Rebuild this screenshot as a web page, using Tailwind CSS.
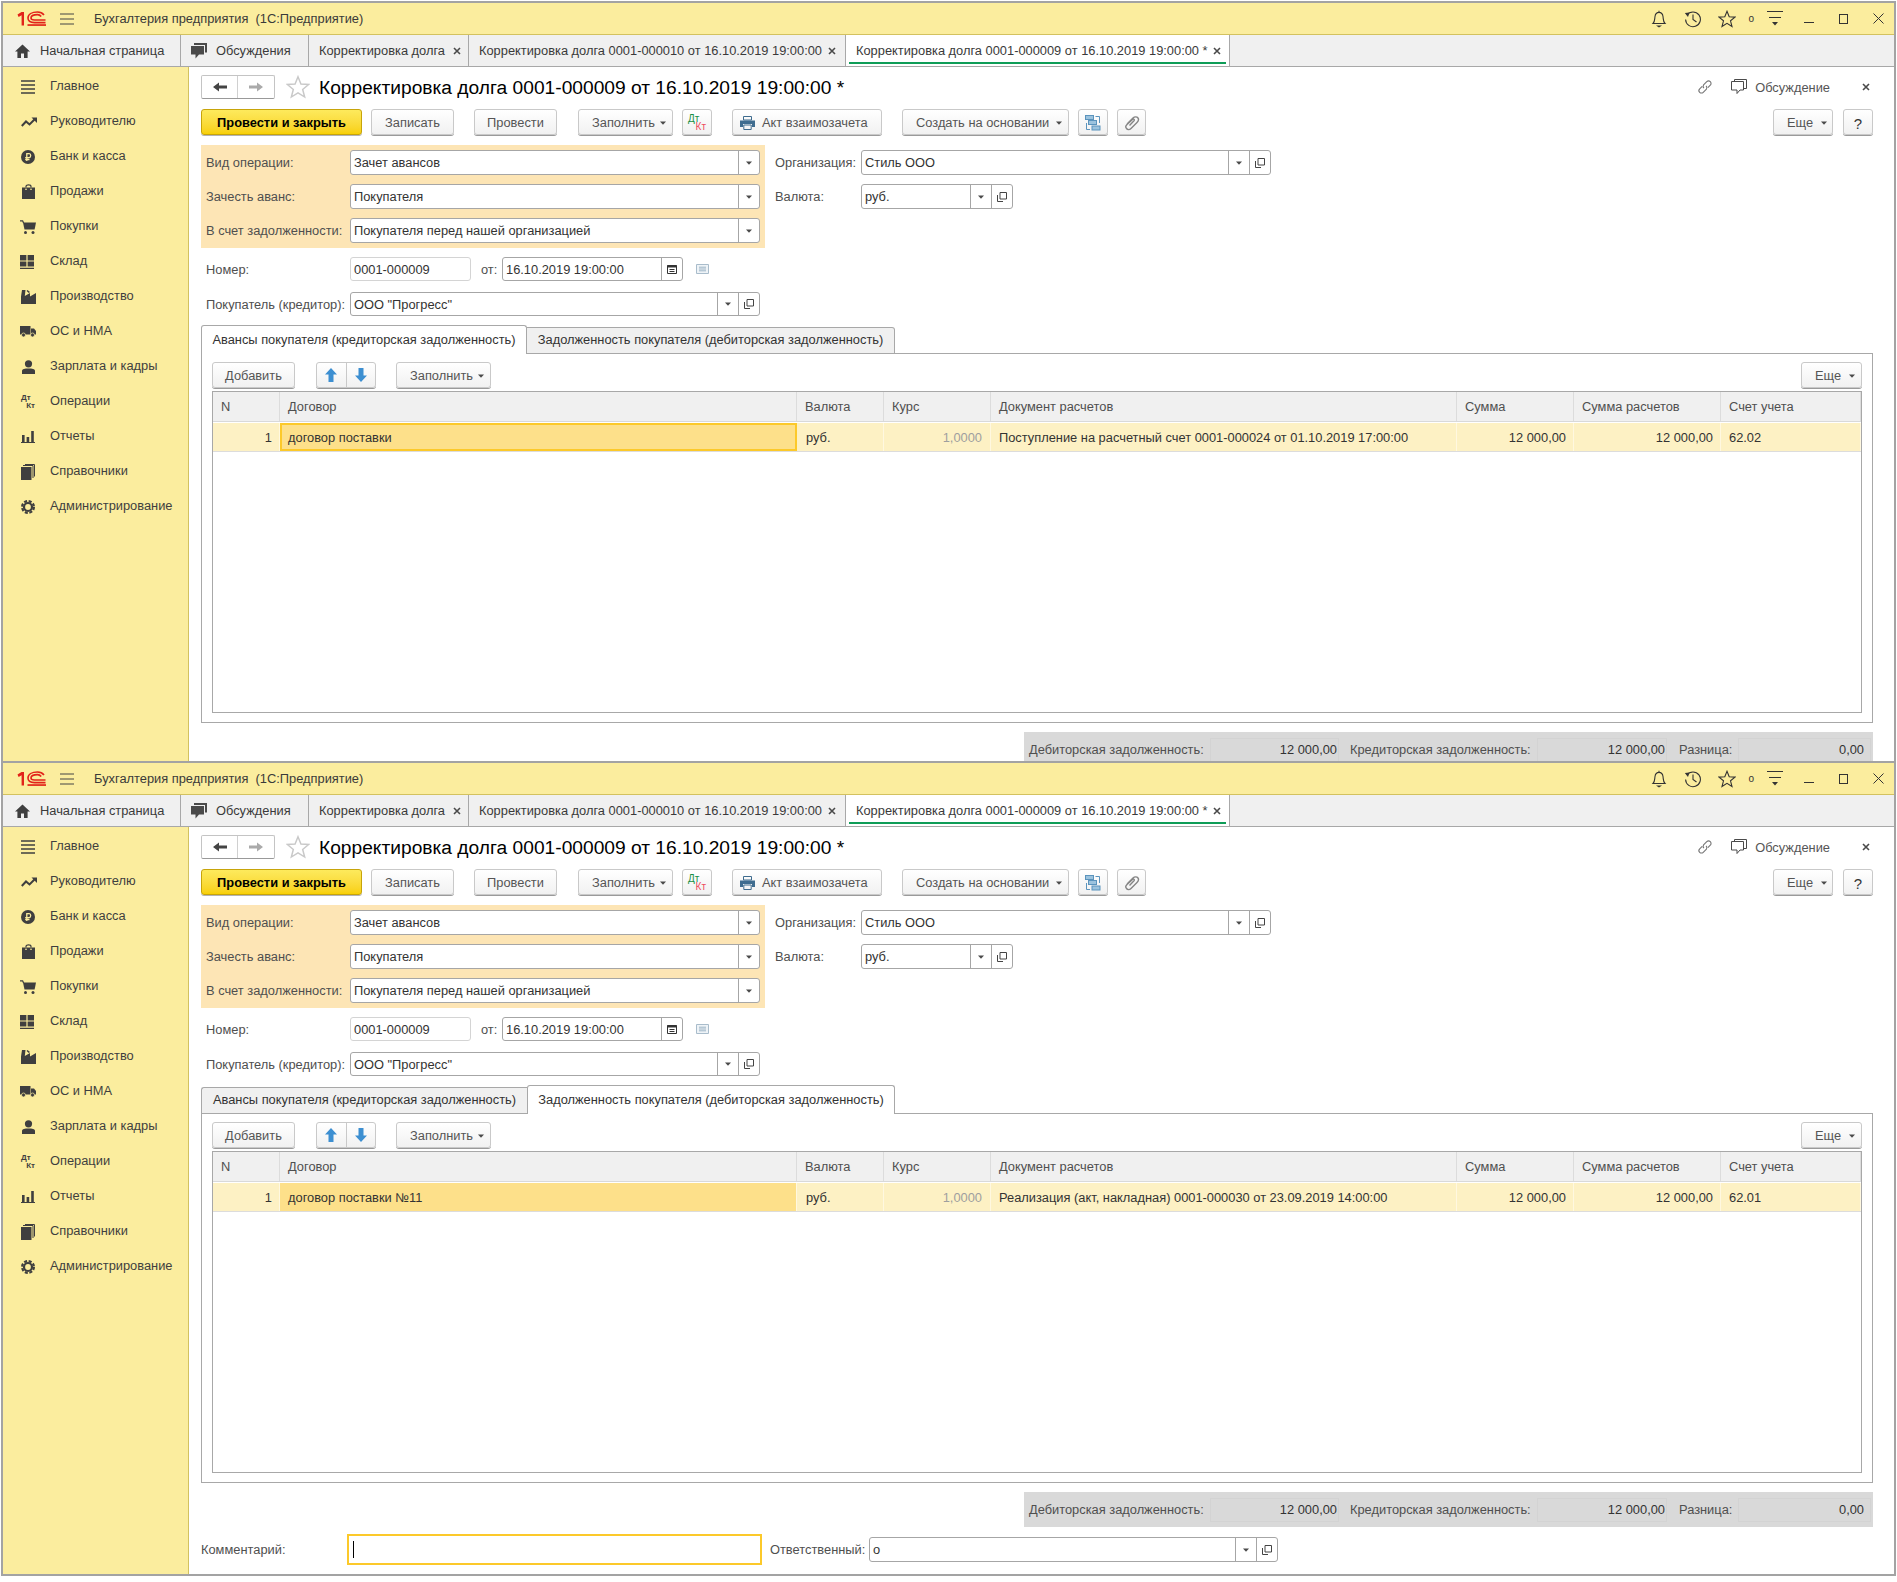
<!DOCTYPE html>
<html lang="ru"><head><meta charset="utf-8"><script src="https://cdn.jsdelivr.net/npm/@tailwindcss/browser@4"></script><title>1C</title></head>
<body class="bg-white text-[12.85px] leading-none text-[#3a3a3a] [font-family:'Liberation_Sans',Arial,sans-serif]">
<svg class="absolute h-0 w-0" aria-hidden="true"><defs>
<symbol id="logo" viewBox="0 0 29 16"><path d="M.5 3.5 L4.5 1 H7 V14.5 H4.6 V4.2 L1.6 6 Z" fill="#e2231a"/><path d="M27 4 C25.5 2 23.5 1 20.5 1 C15 1 11 3.2 11 7 C11 10.5 14 11.6 17.5 11.6 H28.5 M24.2 5.4 C23.2 4.2 22 3.6 20.5 3.6 C17 3.6 14 4.8 14 7 C14 8.4 15.7 9 17.6 9 H28.5" fill="none" stroke="#e2231a" stroke-width="1.6"/><rect x="10.5" y="13.2" width="18.5" height="1.7" fill="#e2231a"/></symbol>
<symbol id="burger" viewBox="0 0 14 12"><path d="M0 1h14M0 6h14M0 11h14" stroke="#444" stroke-width="1"/></symbol>
<symbol id="bell" viewBox="0 0 16 18"><path d="M2 13.5 C4 11.5 3.6 9 4 6.5 C4.4 3.6 6 2.4 8 2.4 C10 2.4 11.6 3.6 12 6.5 C12.4 9 12 11.5 14 13.5 Z M8 .8 V2.4" fill="none" stroke="#333" stroke-width="1.1"/><path d="M5 15.5 H11 L8 17.5 Z" fill="#333"/></symbol>
<symbol id="hist" viewBox="0 0 18 18"><path d="M3 5 A7.4 7.4 0 1 1 1.6 9.5" fill="none" stroke="#333" stroke-width="1.1"/><path d="M0.8 3 L5.5 2.5 L4 7 Z" fill="#333"/><path d="M9 4.5 V9.5 L12.5 12" fill="none" stroke="#333" stroke-width="1.1"/></symbol>
<symbol id="star" viewBox="0 0 18 18"><path d="M9 1.3 L11.2 6.7 L17 7.1 L12.5 10.8 L14 16.5 L9 13.4 L4 16.5 L5.5 10.8 L1 7.1 L6.8 6.7 Z" fill="none" stroke="currentColor" stroke-width="1.1"/></symbol>
<symbol id="filt" viewBox="0 0 16 16"><path d="M0 .5h16M2 6.5h12" stroke="#333"/><path d="M5 11 H11 L8 14.5 Z" fill="#333"/></symbol>
<symbol id="win-x" viewBox="0 0 11 11"><path d="M.5 .5 L10.5 10.5 M10.5 .5 L.5 10.5" stroke="#333" stroke-width="1"/></symbol>
<symbol id="x" viewBox="0 0 8 8"><path d="M1 1 L7 7 M7 1 L1 7" stroke="#4a4a4a" stroke-width="1.6"/></symbol>
<symbol id="home" viewBox="0 0 15 14"><path d="M7.5 0.5 L15 7.5 H12.6 V14 H9 V9.5 H6 V14 H2.4 V7.5 H0 Z" fill="#3f3f3f"/></symbol>
<symbol id="chat" viewBox="0 0 16 16"><path d="M3 0 H16 V9.5 H14 V2 H3 Z" fill="#4a4a4a"/><path d="M0 3 H13 V11.5 H8 L4.5 15.5 V11.5 H0 Z" fill="#4a4a4a"/></symbol>
<symbol id="back" viewBox="0 0 14 10"><path d="M0 5 L6 .5 V3.5 H14 V6.5 H6 V9.5 Z" fill="currentColor"/></symbol>
<symbol id="fwd" viewBox="0 0 14 10"><path d="M14 5 L8 .5 V3.5 H0 V6.5 H8 V9.5 Z" fill="currentColor"/></symbol>
<symbol id="dd" viewBox="0 0 6 4"><path d="M0 .5 H6 L3 3.8 Z" fill="#4a4a4a"/></symbol>
<symbol id="open" viewBox="0 0 10 10"><path d="M3 .5 H9.5 V7 H3 Z" fill="none" stroke="#444"/><path d="M.5 3 V9.5 H6" fill="none" stroke="#444"/></symbol>
<symbol id="print" viewBox="0 0 15 14"><path d="M3.5 0.5 H11.5 V4 H3.5 Z" fill="none" stroke="#3f6c8f"/><path d="M0 4.5 H15 V11 H12 V8 H3 V11 H0 Z" fill="#3f6c8f"/><path d="M3.8 9 H11.2 V13.5 H3.8 Z" fill="none" stroke="#3f6c8f"/></symbol>
<symbol id="struct" viewBox="0 0 16 16"><path d="M1.5 8 V14.5 H5 M10.5 1.5 H14.5 V8" fill="none" stroke="#5b94bd"/><rect x=".5" y=".5" width="8" height="4" fill="#9cc3de" stroke="#5b94bd"/><rect x="3.5" y="5.5" width="8" height="4" fill="#9cc3de" stroke="#5b94bd"/><rect x="7" y="11" width="8" height="4" fill="#9cc3de" stroke="#5b94bd"/></symbol>
<symbol id="clip" viewBox="0 0 16 16"><path d="M3 9 L9 3 C10.5 1.5 13 1.5 14 3 C15 4.5 14.5 6 13 7.5 L7 13.5 C5.5 15 3.5 15 2.5 13.5 C1.5 12.5 1.5 11 3 9.5 L8.5 4.5 C9.5 3.5 11 4.5 10 5.7 L5.5 10.5" fill="none" stroke="#858585" stroke-width="1.4"/></symbol>
<symbol id="cal" viewBox="0 0 10 10"><path d="M.5 1.5 H9.5 V9.5 H.5 Z" fill="none" stroke="#333"/><path d="M.5 1 H9.5 V3.5 H.5 Z" fill="#333"/><path d="M2.5 5.5 H7.5 M2.5 7.5 H7.5" stroke="#333"/></symbol>
<symbol id="note" viewBox="0 0 13 10"><path d="M.5 .5 H12.5 V9.5 H.5 Z" fill="#eef3f7" stroke="#a9bccb"/><path d="M3 3.2 H10 M3 5 H10 M3 6.8 H10" stroke="#9fb5c6"/></symbol>
<symbol id="link" viewBox="0 0 16 16"><g transform="rotate(-45 8 8)" fill="none" stroke="#777" stroke-width="1.1"><path d="M6.5 5.5 H3 A2.5 2.5 0 0 0 3 10.5 H7.5 A2.5 2.5 0 0 0 9.5 8"/><path d="M9.5 10.5 H13 A2.5 2.5 0 0 0 13 5.5 H8.5 A2.5 2.5 0 0 0 6.5 8"/></g></symbol>
<symbol id="chat2" viewBox="0 0 16 16"><path d="M3.5 2.5 V.5 H15.5 V9.5 H13" fill="none" stroke="#4a4a4a"/><path d="M.5 2.5 H12.5 V11 H9 L6 14.5 V11 H.5 Z" fill="none" stroke="#4a4a4a"/></symbol>
<symbol id="up" viewBox="0 0 12 14"><path d="M6 0 L12 6.5 H8.5 V14 H3.5 V6.5 H0 Z" fill="#3d8fd1"/></symbol>
<symbol id="down" viewBox="0 0 12 14"><path d="M6 14 L12 7.5 H8.5 V0 H3.5 V7.5 H0 Z" fill="#3d8fd1"/></symbol>
<symbol id="s-main" viewBox="0 0 14 14"><path d="M0 1h14M0 5h14M0 9h14M0 13h14" stroke="#3f3f3f" stroke-width="1.7"/></symbol>
<symbol id="s-trend" viewBox="0 0 16 10"><path d="M.8 9 L5 4.5 L8.5 7.5 L14 2" fill="none" stroke="#3f3f3f" stroke-width="2"/><path d="M10.5 .5 H16 V6 Z" fill="#3f3f3f"/></symbol>
<symbol id="s-rub" viewBox="0 0 14 14"><circle cx="7" cy="7" r="7" fill="#3f3f3f"/><path d="M5.8 11 V3.6 H8.2 C10.2 3.6 10.2 7.6 8.2 7.6 H4.2 M4.2 9.5 H8.5" fill="none" stroke="#fbed9e" stroke-width="1.3"/></symbol>
<symbol id="s-bag" viewBox="0 0 13 15"><path d="M4 5 V2.5 C4 .2 9 .2 9 2.5 V5" fill="none" stroke="#3f3f3f" stroke-width="1.2"/><path d="M0 3.5 H3.3 V6 H4.7 V3.5 H8.3 V6 H9.7 V3.5 H13 V15 H0 Z" fill="#3f3f3f"/></symbol>
<symbol id="s-cart" viewBox="0 0 16 14"><path d="M0 .8 H2.6 L3.6 3" fill="none" stroke="#3f3f3f" stroke-width="1.3"/><path d="M3 2.5 H16 L14.6 9.5 H4.5 Z" fill="#3f3f3f"/><circle cx="5.5" cy="12.4" r="1.5" fill="#3f3f3f"/><circle cx="13" cy="12.4" r="1.5" fill="#3f3f3f"/></symbol>
<symbol id="s-wh" viewBox="0 0 14 14"><path d="M0 0H6.4V5.4H0ZM7.6 0H14V5.4H7.6ZM0 6.6H6.4V11.5H0ZM7.6 6.6H14V11.5H7.6ZM0 12.7H14V14H0Z" fill="#3f3f3f"/></symbol>
<symbol id="s-fac" viewBox="0 0 15 14"><path d="M1 0 H4.5 L3.8 6 L9 3 V6.5 L15 3 V14 H0 V6.5 Z M6.5 0 L9 2 L7.8 3 L5.6 1 Z" fill="#3f3f3f"/></symbol>
<symbol id="s-truck" viewBox="0 0 16 11"><path d="M0 0 H10.5 V8.5 H0 Z M11 2.5 H14 L16 5 V8.5 H11 Z" fill="#3f3f3f"/><circle cx="3.5" cy="9" r="2" fill="#3f3f3f" stroke="#fbed9e" stroke-width=".7"/><circle cx="12.5" cy="9" r="2" fill="#3f3f3f" stroke="#fbed9e" stroke-width=".7"/></symbol>
<symbol id="s-user" viewBox="0 0 13 14"><circle cx="6.5" cy="3.8" r="3.6" fill="#3f3f3f"/><path d="M0 14 V11 C0 9 3 8.5 6.5 8.5 C10 8.5 13 9 13 11 V14 Z" fill="#3f3f3f"/></symbol>
<symbol id="s-bars" viewBox="0 0 14 12"><path d="M1 4H3.6V11H1ZM5.6 6H8.2V11H5.6ZM10.2 0H12.8V11H10.2ZM0 11H14V12H0Z" fill="#3f3f3f"/></symbol>
<symbol id="s-book" viewBox="0 0 14 16"><path d="M0 3 H10.5 V16 H0 Z" fill="#3f3f3f"/><path d="M2 1.5 H12 V14 M4 .5 H13.5 V12.5" fill="none" stroke="#3f3f3f"/></symbol>
<symbol id="s-gear" viewBox="0 0 14 14"><circle cx="7" cy="7" r="4" fill="none" stroke="#3f3f3f" stroke-width="2.2"/><circle cx="7" cy="7" r="5.9" fill="none" stroke="#3f3f3f" stroke-width="2.2" stroke-dasharray="3 1.63"/></symbol>
</defs></svg>

<div class="h-[1px]"></div>
<!-- WINDOW 1 -->
<section class="ml-[1px] flex h-[760px] w-[1895px] flex-col overflow-hidden border-x-2 border-t-2 border-[#a3a3a3]">
 <header class="flex h-[32px] shrink-0 items-center border-b border-[#d3c25f] bg-[#fbed9e]">
  <svg class="ml-[14px] h-[16px] w-[29px]"><use href="#logo"/></svg><svg class="ml-[14px] h-[12px] w-[14px]"><use href="#burger"/></svg>
  <span class="ml-[20px] mt-[2px] whitespace-pre">Бухгалтерия предприятия  (1С:Предприятие)</span>
  <div class="ml-auto flex items-center text-[#333]"><svg class="h-[18px] w-[16px]"><use href="#bell"/></svg><svg class="ml-[17px] h-[18px] w-[18px]"><use href="#hist"/></svg><svg class="ml-[16px] h-[18px] w-[18px]"><use href="#star"/></svg><span class="ml-[12px] text-[10px]">о</span><svg class="ml-[13px] h-[16px] w-[16px]"><use href="#filt"/></svg><span class="ml-[21px] mt-[8px] h-[1px] w-[10px] bg-[#333]"></span><span class="ml-[25px] h-[10px] w-[9px] border border-[#333]"></span><svg class="ml-[25px] mr-[10px] h-[11px] w-[11px]"><use href="#win-x"/></svg></div>
 </header>
 <nav class="flex h-[32px] shrink-0 items-stretch border-b border-[#a8a8a8] bg-[#f0f0f0] [&>div>span]:pt-[2px]">
  <div class="flex w-[178px] items-center border-r border-[#a8a8a8] pl-[12px]"><svg class="h-[14px] w-[15px]"><use href="#home"/></svg><span class="ml-[10px]">Начальная страница</span></div>
  <div class="flex w-[128px] items-center border-r border-[#a8a8a8] pl-[10px]"><svg class="h-[16px] w-[16px]"><use href="#chat"/></svg><span class="ml-[9px]">Обсуждения</span></div>
  <div class="flex w-[160px] items-center border-r border-[#a8a8a8] pl-[10px]"><span>Корректировка долга</span><svg class="ml-auto mr-[7px] h-[8px] w-[8px]"><use href="#x"/></svg></div>
  <div class="flex w-[377px] items-center border-r border-[#a8a8a8] pl-[10px]"><span>Корректировка долга 0001-000010 от 16.10.2019 19:00:00</span><svg class="ml-auto mr-[9px] h-[8px] w-[8px]"><use href="#x"/></svg></div>
  <div class="relative flex w-[384px] items-center border-r border-[#a8a8a8] bg-white pl-[10px]"><span>Корректировка долга 0001-000009 от 16.10.2019 19:00:00 *</span><svg class="ml-auto mr-[8px] h-[8px] w-[8px]"><use href="#x"/></svg><span class="absolute bottom-[2px] left-[3px] right-[3px] h-[2px] bg-[#0f9d58]"></span></div>
 </nav>
 <div class="flex min-h-0 flex-1">
  <aside class="w-[186px] shrink-0 border-r border-[#d3c25f] bg-[#fbed9e] pt-[2px] text-[#3f3f3f]">
   <div class="flex h-[35px] items-center"><svg class="ml-[18px] h-[14px] w-[14px]"><use href="#s-main"/></svg><span class="ml-[15px]">Главное</span></div>
   <div class="flex h-[35px] items-center"><svg class="ml-[18px] h-[10px] w-[16px]"><use href="#s-trend"/></svg><span class="ml-[13px]">Руководителю</span></div>
   <div class="flex h-[35px] items-center"><svg class="ml-[18px] h-[14px] w-[14px]"><use href="#s-rub"/></svg><span class="ml-[15px]">Банк и касса</span></div>
   <div class="flex h-[35px] items-center"><svg class="ml-[19px] h-[15px] w-[13px]"><use href="#s-bag"/></svg><span class="ml-[15px]">Продажи</span></div>
   <div class="flex h-[35px] items-center"><svg class="ml-[17px] h-[14px] w-[16px]"><use href="#s-cart"/></svg><span class="ml-[14px]">Покупки</span></div>
   <div class="flex h-[35px] items-center"><svg class="ml-[17px] h-[14px] w-[14px]"><use href="#s-wh"/></svg><span class="ml-[16px]">Склад</span></div>
   <div class="flex h-[35px] items-center"><svg class="ml-[18px] h-[14px] w-[15px]"><use href="#s-fac"/></svg><span class="ml-[14px]">Производство</span></div>
   <div class="flex h-[35px] items-center"><svg class="ml-[17px] h-[11px] w-[16px]"><use href="#s-truck"/></svg><span class="ml-[14px]">ОС и НМА</span></div>
   <div class="flex h-[35px] items-center"><svg class="ml-[19px] h-[14px] w-[13px]"><use href="#s-user"/></svg><span class="ml-[15px]">Зарплата и кадры</span></div>
   <div class="flex h-[35px] items-center"><span class="ml-[18px] flex w-[14px] flex-col text-[8px] font-bold leading-[8px]"><span>Дт</span><span class="self-end">Кт</span></span><span class="ml-[15px]">Операции</span></div>
   <div class="flex h-[35px] items-center"><svg class="ml-[18px] h-[12px] w-[14px]"><use href="#s-bars"/></svg><span class="ml-[15px]">Отчеты</span></div>
   <div class="flex h-[35px] items-center"><svg class="ml-[18px] h-[16px] w-[14px]"><use href="#s-book"/></svg><span class="ml-[15px]">Справочники</span></div>
   <div class="flex h-[35px] items-center"><svg class="ml-[18px] h-[14px] w-[14px]"><use href="#s-gear"/></svg><span class="ml-[15px]">Администрирование</span></div>
  </aside>
  <main class="min-w-0 flex-1 pl-[12px] pt-[8px] [&_span:not(:has(svg))]:pt-[2px]">
   <div class="flex h-[24px] items-center">
    <div class="flex h-[24px] w-[74px] rounded-[2px] border border-[#c4c4c4] border-b-[#999]"><span class="flex w-[36px] items-center justify-center border-r border-[#d0d0d0] text-[#444]"><svg class="h-[10px] w-[14px]"><use href="#back"/></svg></span><span class="flex flex-1 items-center justify-center text-[#aaa]"><svg class="h-[10px] w-[14px]"><use href="#fwd"/></svg></span></div>
    <svg class="ml-[11px] h-[24px] w-[24px] text-[#c9c9c9]"><use href="#star"/></svg>
    <h1 class="ml-[9px] pt-[1px] text-[19.2px] font-normal text-black">Корректировка долга 0001-000009 от 16.10.2019 19:00:00 *</h1>
    <div class="ml-auto flex items-center text-[#555]"><svg class="h-[16px] w-[16px]"><use href="#link"/></svg><svg class="ml-[18px] h-[16px] w-[16px]"><use href="#chat2"/></svg><span class="ml-[8px]">Обсуждение</span><svg class="ml-[32px] mr-[24px] h-[8px] w-[8px]"><use href="#x"/></svg></div>
   </div>
   <div class="mt-[10px] flex h-[26px] items-stretch [&>div]:pt-[2px]">
    <div class="flex w-[161px] items-center justify-center rounded-[3px] border border-[#c7a40a] bg-linear-to-b from-[#fdea5c] to-[#f8d000] font-bold text-black shadow-[0_1px_0_#b3b3b3]">Провести и закрыть</div>
    <div class="ml-[9px] flex w-[83px] items-center justify-center rounded-[3px] border border-[#c9c9c9] bg-linear-to-b from-white to-[#f1f1f1] text-[#555] shadow-[0_1px_0_#9a9a9a]">Записать</div>
    <div class="ml-[20px] flex w-[83px] items-center justify-center rounded-[3px] border border-[#c9c9c9] bg-linear-to-b from-white to-[#f1f1f1] text-[#555] shadow-[0_1px_0_#9a9a9a]">Провести</div>
    <div class="ml-[21px] flex w-[95px] items-center gap-[5px] rounded-[3px] border border-[#c9c9c9] bg-linear-to-b from-white to-[#f1f1f1] pl-[13px] text-[#555] shadow-[0_1px_0_#9a9a9a]">Заполнить<svg class="h-[4px] w-[6px]"><use href="#dd"/></svg></div>
    <div class="ml-[9px] flex w-[30px] flex-col justify-center rounded-[3px] border border-[#c9c9c9] bg-linear-to-b from-white to-[#f1f1f1] px-[5px] text-[10px] leading-[8px] shadow-[0_1px_0_#9a9a9a]"><span class="pt-0! text-[#1a8f45]">Дт</span><span class="self-end pt-0! text-[#ee4d5f]">Кт</span></div>
    <div class="ml-[20px] flex w-[150px] items-center gap-[7px] rounded-[3px] border border-[#c9c9c9] bg-linear-to-b from-white to-[#f1f1f1] pl-[7px] text-[#555] shadow-[0_1px_0_#9a9a9a]"><svg class="h-[14px] w-[15px]"><use href="#print"/></svg>Акт взаимозачета</div>
    <div class="ml-[20px] flex w-[167px] items-center gap-[7px] rounded-[3px] border border-[#c9c9c9] bg-linear-to-b from-white to-[#f1f1f1] pl-[13px] text-[#555] shadow-[0_1px_0_#9a9a9a]">Создать на основании<svg class="h-[4px] w-[6px]"><use href="#dd"/></svg></div>
    <div class="ml-[9px] flex w-[30px] items-center justify-center rounded-[3px] border border-[#c9c9c9] bg-linear-to-b from-white to-[#f1f1f1] shadow-[0_1px_0_#9a9a9a]"><svg class="h-[16px] w-[16px]"><use href="#struct"/></svg></div>
    <div class="ml-[9px] flex w-[29px] items-center justify-center rounded-[3px] border border-[#c9c9c9] bg-linear-to-b from-white to-[#f1f1f1] shadow-[0_1px_0_#9a9a9a]"><svg class="h-[16px] w-[16px]"><use href="#clip"/></svg></div>
    <div class="ml-auto flex w-[60px] items-center gap-[8px] rounded-[3px] border border-[#c9c9c9] bg-linear-to-b from-white to-[#f1f1f1] pl-[13px] text-[#555] shadow-[0_1px_0_#9a9a9a]">Еще<svg class="h-[4px] w-[6px]"><use href="#dd"/></svg></div>
    <div class="ml-[10px] mr-[21px] flex w-[30px] items-center justify-center rounded-[3px] border border-[#c9c9c9] bg-linear-to-b from-white to-[#f1f1f1] text-[15px] text-[#333] shadow-[0_1px_0_#9a9a9a]">?</div>
   </div>
   <div class="mt-[10px] flex items-start">
    <div class="flex h-[103px] w-[564px] flex-col gap-[9px] bg-[#fde5b5] pl-[5px] pt-[5px] text-[#4f4f4f]">
     <div class="flex items-center"><span class="w-[144px]">Вид операции:</span><div class="flex h-[25px] w-[410px] items-stretch rounded-[3px] border border-[#a6a6a6] bg-white text-[#333]"><span class="flex flex-1 items-center pl-[3px]">Зачет авансов</span><span class="flex w-[21px] items-center justify-center border-l border-[#a6a6a6]"><svg class="h-[4px] w-[6px]"><use href="#dd"/></svg></span></div></div>
     <div class="flex items-center"><span class="w-[144px]">Зачесть аванс:</span><div class="flex h-[25px] w-[410px] items-stretch rounded-[3px] border border-[#a6a6a6] bg-white text-[#333]"><span class="flex flex-1 items-center pl-[3px]">Покупателя</span><span class="flex w-[21px] items-center justify-center border-l border-[#a6a6a6]"><svg class="h-[4px] w-[6px]"><use href="#dd"/></svg></span></div></div>
     <div class="flex items-center"><span class="w-[144px]">В счет задолженности:</span><div class="flex h-[25px] w-[410px] items-stretch rounded-[3px] border border-[#a6a6a6] bg-white text-[#333]"><span class="flex flex-1 items-center pl-[3px]">Покупателя перед нашей организацией</span><span class="flex w-[21px] items-center justify-center border-l border-[#a6a6a6]"><svg class="h-[4px] w-[6px]"><use href="#dd"/></svg></span></div></div>
    </div>
    <div class="ml-[10px] flex flex-col gap-[9px] pt-[5px] text-[#4f4f4f]">
     <div class="flex items-center"><span class="w-[86px]">Организация:</span><div class="flex h-[25px] w-[410px] items-stretch rounded-[3px] border border-[#a6a6a6] bg-white text-[#333]"><span class="flex flex-1 items-center pl-[3px]">Стиль ООО</span><span class="flex w-[21px] items-center justify-center border-l border-[#a6a6a6]"><svg class="h-[4px] w-[6px]"><use href="#dd"/></svg></span><span class="flex w-[21px] items-center justify-center border-l border-[#a6a6a6]"><svg class="h-[10px] w-[10px]"><use href="#open"/></svg></span></div></div>
     <div class="flex items-center"><span class="w-[86px]">Валюта:</span><div class="flex h-[25px] w-[152px] items-stretch rounded-[3px] border border-[#a6a6a6] bg-white text-[#333]"><span class="flex flex-1 items-center pl-[3px]">руб.</span><span class="flex w-[21px] items-center justify-center border-l border-[#a6a6a6]"><svg class="h-[4px] w-[6px]"><use href="#dd"/></svg></span><span class="flex w-[21px] items-center justify-center border-l border-[#a6a6a6]"><svg class="h-[10px] w-[10px]"><use href="#open"/></svg></span></div></div>
    </div>
   </div>
   <div class="mt-[9px] flex h-[24px] items-center pl-[5px] text-[#4f4f4f]"><span class="w-[144px]">Номер:</span><div class="flex h-[24px] w-[121px] items-center rounded-[3px] border border-[#d4d4d4] pl-[3px] pt-[2px] text-[#333]">0001-000009</div><span class="ml-[10px] w-[21px]">от:</span><div class="flex h-[24px] w-[181px] items-stretch rounded-[3px] border border-[#a6a6a6] text-[#333]"><span class="flex flex-1 items-center pl-[3px]">16.10.2019 19:00:00</span><span class="flex w-[21px] items-center justify-center border-l border-[#a6a6a6]"><svg class="h-[10px] w-[10px]"><use href="#cal"/></svg></span></div><svg class="ml-[13px] h-[10px] w-[13px]"><use href="#note"/></svg></div>
   <div class="mt-[11px] flex h-[24px] items-center pl-[5px] text-[#4f4f4f]"><span class="w-[144px]">Покупатель (кредитор):</span><div class="flex h-[24px] w-[410px] items-stretch rounded-[3px] border border-[#a6a6a6] text-[#333]"><span class="flex flex-1 items-center pl-[3px]">ООО "Прогресс"</span><span class="flex w-[21px] items-center justify-center border-l border-[#a6a6a6]"><svg class="h-[4px] w-[6px]"><use href="#dd"/></svg></span><span class="flex w-[21px] items-center justify-center border-l border-[#a6a6a6]"><svg class="h-[10px] w-[10px]"><use href="#open"/></svg></span></div></div>
   <div class="relative z-10 mt-[9px] flex h-[29px] items-end text-[#333]"><div class="flex h-[29px] w-[326px] items-center justify-center rounded-t-[3px] border border-b-0 border-[#a8a8a8] bg-white">Авансы покупателя (кредиторская задолженность)</div><div class="flex h-[27px] w-[368px] items-center justify-center rounded-tr-[3px] border border-l-0 border-[#a8a8a8] bg-[#f0f0f0]">Задолженность покупателя (дебиторская задолженность)</div></div>
   <div class="-mt-[1px] h-[370px] w-[1672px] border border-[#a8a8a8] px-[10px] pt-[8px]">
    <div class="flex h-[26px] items-stretch text-[#555] [&>div]:pt-[2px]">
     <div class="flex w-[83px] items-center justify-center rounded-[3px] border border-[#c9c9c9] bg-linear-to-b from-white to-[#f1f1f1] shadow-[0_1px_0_#9a9a9a]">Добавить</div>
     <div class="ml-[21px] flex w-[60px] rounded-[3px] border border-[#c9c9c9] bg-linear-to-b from-white to-[#f1f1f1] pt-0! shadow-[0_1px_0_#9a9a9a]"><span class="flex flex-1 items-center justify-center border-r border-[#c9c9c9]"><svg class="h-[14px] w-[12px]"><use href="#up"/></svg></span><span class="flex flex-1 items-center justify-center"><svg class="h-[14px] w-[12px]"><use href="#down"/></svg></span></div>
     <div class="ml-[20px] flex w-[95px] items-center gap-[5px] rounded-[3px] border border-[#c9c9c9] bg-linear-to-b from-white to-[#f1f1f1] pl-[13px] shadow-[0_1px_0_#9a9a9a]">Заполнить<svg class="h-[4px] w-[6px]"><use href="#dd"/></svg></div>
     <div class="ml-auto flex w-[61px] items-center gap-[8px] rounded-[3px] border border-[#c9c9c9] bg-linear-to-b from-white to-[#f1f1f1] pl-[13px] shadow-[0_1px_0_#9a9a9a]">Еще<svg class="h-[4px] w-[6px]"><use href="#dd"/></svg></div>
    </div>
    <div class="mt-[3px] h-[322px] w-[1650px] border border-[#a8a8a8]">
     <div class="grid h-[30px] grid-cols-[67px_517px_87px_107px_466px_117px_147px_1fr] border-b border-[#d9d9d9] bg-[#f0f0f0] text-[#4f4f4f] [&>div]:flex [&>div]:items-center [&>div]:border-r [&>div]:border-[#dcdcdc] [&>div]:pl-[8px] [&>div]:pt-[2px]"><div>N</div><div>Договор</div><div>Валюта</div><div>Курс</div><div>Документ расчетов</div><div>Сумма</div><div>Сумма расчетов</div><div class="border-r-0">Счет учета</div></div>
     <div class="mt-[1px] grid h-[29px] grid-cols-[67px_517px_87px_107px_466px_117px_147px_1fr] border-b border-[#dcdcdc] bg-[#fdf1c4] text-[#333] [&>div]:flex [&>div]:items-center [&>div]:border-r [&>div]:border-[#fff8e0] [&>div]:pt-[3px]"><div class="justify-end pr-[7px]">1</div><div class="border-2! border-[#fcc92a]! bg-[#fde08a] pl-[6px]">договор поставки</div><div class="pl-[9px]">руб.</div><div class="justify-end pr-[8px] text-[#9f9f9f]">1,0000</div><div class="pl-[8px]">Поступление на расчетный счет 0001-000024 от 01.10.2019 17:00:00</div><div class="justify-end pr-[7px]">12 000,00</div><div class="justify-end pr-[7px]">12 000,00</div><div class="pl-[8px]">62.02</div></div>
    </div>
   </div>
   <div class="ml-[823px] mt-[9px] flex h-[35px] w-[849px] items-center bg-[#d9d9d9] text-[#4f4f4f]"><span class="ml-[5px] w-[181px]">Дебиторская задолженность:</span><span class="flex h-[24px] w-[129px] items-center justify-end border border-[#d3d3d3] pr-[1px] text-[#333]">12 000,00</span><span class="ml-[11px] w-[187px]">Кредиторская задолженность:</span><span class="flex h-[24px] w-[130px] items-center justify-end border border-[#d3d3d3] pr-[1px] text-[#333]">12 000,00</span><span class="ml-[12px] w-[59px]">Разница:</span><span class="flex h-[24px] w-[133px] items-center justify-end border border-[#d3d3d3] pr-[6px] text-[#333]">0,00</span></div>
  </main>
 </div>
</section>

<!-- WINDOW 2 -->
<section class="ml-[1px] flex h-[815px] w-[1895px] flex-col overflow-hidden border-2 border-[#a3a3a3]">
 <header class="flex h-[32px] shrink-0 items-center border-b border-[#d3c25f] bg-[#fbed9e]">
  <svg class="ml-[14px] h-[16px] w-[29px]"><use href="#logo"/></svg><svg class="ml-[14px] h-[12px] w-[14px]"><use href="#burger"/></svg>
  <span class="ml-[20px] mt-[2px] whitespace-pre">Бухгалтерия предприятия  (1С:Предприятие)</span>
  <div class="ml-auto flex items-center text-[#333]"><svg class="h-[18px] w-[16px]"><use href="#bell"/></svg><svg class="ml-[17px] h-[18px] w-[18px]"><use href="#hist"/></svg><svg class="ml-[16px] h-[18px] w-[18px]"><use href="#star"/></svg><span class="ml-[12px] text-[10px]">о</span><svg class="ml-[13px] h-[16px] w-[16px]"><use href="#filt"/></svg><span class="ml-[21px] mt-[8px] h-[1px] w-[10px] bg-[#333]"></span><span class="ml-[25px] h-[10px] w-[9px] border border-[#333]"></span><svg class="ml-[25px] mr-[10px] h-[11px] w-[11px]"><use href="#win-x"/></svg></div>
 </header>
 <nav class="flex h-[32px] shrink-0 items-stretch border-b border-[#a8a8a8] bg-[#f0f0f0] [&>div>span]:pt-[2px]">
  <div class="flex w-[178px] items-center border-r border-[#a8a8a8] pl-[12px]"><svg class="h-[14px] w-[15px]"><use href="#home"/></svg><span class="ml-[10px]">Начальная страница</span></div>
  <div class="flex w-[128px] items-center border-r border-[#a8a8a8] pl-[10px]"><svg class="h-[16px] w-[16px]"><use href="#chat"/></svg><span class="ml-[9px]">Обсуждения</span></div>
  <div class="flex w-[160px] items-center border-r border-[#a8a8a8] pl-[10px]"><span>Корректировка долга</span><svg class="ml-auto mr-[7px] h-[8px] w-[8px]"><use href="#x"/></svg></div>
  <div class="flex w-[377px] items-center border-r border-[#a8a8a8] pl-[10px]"><span>Корректировка долга 0001-000010 от 16.10.2019 19:00:00</span><svg class="ml-auto mr-[9px] h-[8px] w-[8px]"><use href="#x"/></svg></div>
  <div class="relative flex w-[384px] items-center border-r border-[#a8a8a8] bg-white pl-[10px]"><span>Корректировка долга 0001-000009 от 16.10.2019 19:00:00 *</span><svg class="ml-auto mr-[8px] h-[8px] w-[8px]"><use href="#x"/></svg><span class="absolute bottom-[2px] left-[3px] right-[3px] h-[2px] bg-[#0f9d58]"></span></div>
 </nav>
 <div class="flex min-h-0 flex-1">
  <aside class="w-[186px] shrink-0 border-r border-[#d3c25f] bg-[#fbed9e] pt-[2px] text-[#3f3f3f]">
   <div class="flex h-[35px] items-center"><svg class="ml-[18px] h-[14px] w-[14px]"><use href="#s-main"/></svg><span class="ml-[15px]">Главное</span></div>
   <div class="flex h-[35px] items-center"><svg class="ml-[18px] h-[10px] w-[16px]"><use href="#s-trend"/></svg><span class="ml-[13px]">Руководителю</span></div>
   <div class="flex h-[35px] items-center"><svg class="ml-[18px] h-[14px] w-[14px]"><use href="#s-rub"/></svg><span class="ml-[15px]">Банк и касса</span></div>
   <div class="flex h-[35px] items-center"><svg class="ml-[19px] h-[15px] w-[13px]"><use href="#s-bag"/></svg><span class="ml-[15px]">Продажи</span></div>
   <div class="flex h-[35px] items-center"><svg class="ml-[17px] h-[14px] w-[16px]"><use href="#s-cart"/></svg><span class="ml-[14px]">Покупки</span></div>
   <div class="flex h-[35px] items-center"><svg class="ml-[17px] h-[14px] w-[14px]"><use href="#s-wh"/></svg><span class="ml-[16px]">Склад</span></div>
   <div class="flex h-[35px] items-center"><svg class="ml-[18px] h-[14px] w-[15px]"><use href="#s-fac"/></svg><span class="ml-[14px]">Производство</span></div>
   <div class="flex h-[35px] items-center"><svg class="ml-[17px] h-[11px] w-[16px]"><use href="#s-truck"/></svg><span class="ml-[14px]">ОС и НМА</span></div>
   <div class="flex h-[35px] items-center"><svg class="ml-[19px] h-[14px] w-[13px]"><use href="#s-user"/></svg><span class="ml-[15px]">Зарплата и кадры</span></div>
   <div class="flex h-[35px] items-center"><span class="ml-[18px] flex w-[14px] flex-col text-[8px] font-bold leading-[8px]"><span>Дт</span><span class="self-end">Кт</span></span><span class="ml-[15px]">Операции</span></div>
   <div class="flex h-[35px] items-center"><svg class="ml-[18px] h-[12px] w-[14px]"><use href="#s-bars"/></svg><span class="ml-[15px]">Отчеты</span></div>
   <div class="flex h-[35px] items-center"><svg class="ml-[18px] h-[16px] w-[14px]"><use href="#s-book"/></svg><span class="ml-[15px]">Справочники</span></div>
   <div class="flex h-[35px] items-center"><svg class="ml-[18px] h-[14px] w-[14px]"><use href="#s-gear"/></svg><span class="ml-[15px]">Администрирование</span></div>
  </aside>
  <main class="min-w-0 flex-1 pl-[12px] pt-[8px] [&_span:not(:has(svg))]:pt-[2px]">
   <div class="flex h-[24px] items-center">
    <div class="flex h-[24px] w-[74px] rounded-[2px] border border-[#c4c4c4] border-b-[#999]"><span class="flex w-[36px] items-center justify-center border-r border-[#d0d0d0] text-[#444]"><svg class="h-[10px] w-[14px]"><use href="#back"/></svg></span><span class="flex flex-1 items-center justify-center text-[#aaa]"><svg class="h-[10px] w-[14px]"><use href="#fwd"/></svg></span></div>
    <svg class="ml-[11px] h-[24px] w-[24px] text-[#c9c9c9]"><use href="#star"/></svg>
    <h1 class="ml-[9px] pt-[1px] text-[19.2px] font-normal text-black">Корректировка долга 0001-000009 от 16.10.2019 19:00:00 *</h1>
    <div class="ml-auto flex items-center text-[#555]"><svg class="h-[16px] w-[16px]"><use href="#link"/></svg><svg class="ml-[18px] h-[16px] w-[16px]"><use href="#chat2"/></svg><span class="ml-[8px]">Обсуждение</span><svg class="ml-[32px] mr-[24px] h-[8px] w-[8px]"><use href="#x"/></svg></div>
   </div>
   <div class="mt-[10px] flex h-[26px] items-stretch [&>div]:pt-[2px]">
    <div class="flex w-[161px] items-center justify-center rounded-[3px] border border-[#c7a40a] bg-linear-to-b from-[#fdea5c] to-[#f8d000] font-bold text-black shadow-[0_1px_0_#b3b3b3]">Провести и закрыть</div>
    <div class="ml-[9px] flex w-[83px] items-center justify-center rounded-[3px] border border-[#c9c9c9] bg-linear-to-b from-white to-[#f1f1f1] text-[#555] shadow-[0_1px_0_#9a9a9a]">Записать</div>
    <div class="ml-[20px] flex w-[83px] items-center justify-center rounded-[3px] border border-[#c9c9c9] bg-linear-to-b from-white to-[#f1f1f1] text-[#555] shadow-[0_1px_0_#9a9a9a]">Провести</div>
    <div class="ml-[21px] flex w-[95px] items-center gap-[5px] rounded-[3px] border border-[#c9c9c9] bg-linear-to-b from-white to-[#f1f1f1] pl-[13px] text-[#555] shadow-[0_1px_0_#9a9a9a]">Заполнить<svg class="h-[4px] w-[6px]"><use href="#dd"/></svg></div>
    <div class="ml-[9px] flex w-[30px] flex-col justify-center rounded-[3px] border border-[#c9c9c9] bg-linear-to-b from-white to-[#f1f1f1] px-[5px] text-[10px] leading-[8px] shadow-[0_1px_0_#9a9a9a]"><span class="pt-0! text-[#1a8f45]">Дт</span><span class="self-end pt-0! text-[#ee4d5f]">Кт</span></div>
    <div class="ml-[20px] flex w-[150px] items-center gap-[7px] rounded-[3px] border border-[#c9c9c9] bg-linear-to-b from-white to-[#f1f1f1] pl-[7px] text-[#555] shadow-[0_1px_0_#9a9a9a]"><svg class="h-[14px] w-[15px]"><use href="#print"/></svg>Акт взаимозачета</div>
    <div class="ml-[20px] flex w-[167px] items-center gap-[7px] rounded-[3px] border border-[#c9c9c9] bg-linear-to-b from-white to-[#f1f1f1] pl-[13px] text-[#555] shadow-[0_1px_0_#9a9a9a]">Создать на основании<svg class="h-[4px] w-[6px]"><use href="#dd"/></svg></div>
    <div class="ml-[9px] flex w-[30px] items-center justify-center rounded-[3px] border border-[#c9c9c9] bg-linear-to-b from-white to-[#f1f1f1] shadow-[0_1px_0_#9a9a9a]"><svg class="h-[16px] w-[16px]"><use href="#struct"/></svg></div>
    <div class="ml-[9px] flex w-[29px] items-center justify-center rounded-[3px] border border-[#c9c9c9] bg-linear-to-b from-white to-[#f1f1f1] shadow-[0_1px_0_#9a9a9a]"><svg class="h-[16px] w-[16px]"><use href="#clip"/></svg></div>
    <div class="ml-auto flex w-[60px] items-center gap-[8px] rounded-[3px] border border-[#c9c9c9] bg-linear-to-b from-white to-[#f1f1f1] pl-[13px] text-[#555] shadow-[0_1px_0_#9a9a9a]">Еще<svg class="h-[4px] w-[6px]"><use href="#dd"/></svg></div>
    <div class="ml-[10px] mr-[21px] flex w-[30px] items-center justify-center rounded-[3px] border border-[#c9c9c9] bg-linear-to-b from-white to-[#f1f1f1] text-[15px] text-[#333] shadow-[0_1px_0_#9a9a9a]">?</div>
   </div>
   <div class="mt-[10px] flex items-start">
    <div class="flex h-[103px] w-[564px] flex-col gap-[9px] bg-[#fde5b5] pl-[5px] pt-[5px] text-[#4f4f4f]">
     <div class="flex items-center"><span class="w-[144px]">Вид операции:</span><div class="flex h-[25px] w-[410px] items-stretch rounded-[3px] border border-[#a6a6a6] bg-white text-[#333]"><span class="flex flex-1 items-center pl-[3px]">Зачет авансов</span><span class="flex w-[21px] items-center justify-center border-l border-[#a6a6a6]"><svg class="h-[4px] w-[6px]"><use href="#dd"/></svg></span></div></div>
     <div class="flex items-center"><span class="w-[144px]">Зачесть аванс:</span><div class="flex h-[25px] w-[410px] items-stretch rounded-[3px] border border-[#a6a6a6] bg-white text-[#333]"><span class="flex flex-1 items-center pl-[3px]">Покупателя</span><span class="flex w-[21px] items-center justify-center border-l border-[#a6a6a6]"><svg class="h-[4px] w-[6px]"><use href="#dd"/></svg></span></div></div>
     <div class="flex items-center"><span class="w-[144px]">В счет задолженности:</span><div class="flex h-[25px] w-[410px] items-stretch rounded-[3px] border border-[#a6a6a6] bg-white text-[#333]"><span class="flex flex-1 items-center pl-[3px]">Покупателя перед нашей организацией</span><span class="flex w-[21px] items-center justify-center border-l border-[#a6a6a6]"><svg class="h-[4px] w-[6px]"><use href="#dd"/></svg></span></div></div>
    </div>
    <div class="ml-[10px] flex flex-col gap-[9px] pt-[5px] text-[#4f4f4f]">
     <div class="flex items-center"><span class="w-[86px]">Организация:</span><div class="flex h-[25px] w-[410px] items-stretch rounded-[3px] border border-[#a6a6a6] bg-white text-[#333]"><span class="flex flex-1 items-center pl-[3px]">Стиль ООО</span><span class="flex w-[21px] items-center justify-center border-l border-[#a6a6a6]"><svg class="h-[4px] w-[6px]"><use href="#dd"/></svg></span><span class="flex w-[21px] items-center justify-center border-l border-[#a6a6a6]"><svg class="h-[10px] w-[10px]"><use href="#open"/></svg></span></div></div>
     <div class="flex items-center"><span class="w-[86px]">Валюта:</span><div class="flex h-[25px] w-[152px] items-stretch rounded-[3px] border border-[#a6a6a6] bg-white text-[#333]"><span class="flex flex-1 items-center pl-[3px]">руб.</span><span class="flex w-[21px] items-center justify-center border-l border-[#a6a6a6]"><svg class="h-[4px] w-[6px]"><use href="#dd"/></svg></span><span class="flex w-[21px] items-center justify-center border-l border-[#a6a6a6]"><svg class="h-[10px] w-[10px]"><use href="#open"/></svg></span></div></div>
    </div>
   </div>
   <div class="mt-[9px] flex h-[24px] items-center pl-[5px] text-[#4f4f4f]"><span class="w-[144px]">Номер:</span><div class="flex h-[24px] w-[121px] items-center rounded-[3px] border border-[#d4d4d4] pl-[3px] pt-[2px] text-[#333]">0001-000009</div><span class="ml-[10px] w-[21px]">от:</span><div class="flex h-[24px] w-[181px] items-stretch rounded-[3px] border border-[#a6a6a6] text-[#333]"><span class="flex flex-1 items-center pl-[3px]">16.10.2019 19:00:00</span><span class="flex w-[21px] items-center justify-center border-l border-[#a6a6a6]"><svg class="h-[10px] w-[10px]"><use href="#cal"/></svg></span></div><svg class="ml-[13px] h-[10px] w-[13px]"><use href="#note"/></svg></div>
   <div class="mt-[11px] flex h-[24px] items-center pl-[5px] text-[#4f4f4f]"><span class="w-[144px]">Покупатель (кредитор):</span><div class="flex h-[24px] w-[410px] items-stretch rounded-[3px] border border-[#a6a6a6] text-[#333]"><span class="flex flex-1 items-center pl-[3px]">ООО "Прогресс"</span><span class="flex w-[21px] items-center justify-center border-l border-[#a6a6a6]"><svg class="h-[4px] w-[6px]"><use href="#dd"/></svg></span><span class="flex w-[21px] items-center justify-center border-l border-[#a6a6a6]"><svg class="h-[10px] w-[10px]"><use href="#open"/></svg></span></div></div>
   <div class="relative z-10 mt-[9px] flex h-[29px] items-end text-[#333]"><div class="flex h-[27px] w-[326px] items-center justify-center rounded-tl-[3px] border border-r-0 border-[#a8a8a8] bg-[#f0f0f0]">Авансы покупателя (кредиторская задолженность)</div><div class="flex h-[29px] w-[368px] items-center justify-center rounded-t-[3px] border border-b-0 border-[#a8a8a8] bg-white">Задолженность покупателя (дебиторская задолженность)</div></div>
   <div class="-mt-[1px] h-[370px] w-[1672px] border border-[#a8a8a8] px-[10px] pt-[8px]">
    <div class="flex h-[26px] items-stretch text-[#555] [&>div]:pt-[2px]">
     <div class="flex w-[83px] items-center justify-center rounded-[3px] border border-[#c9c9c9] bg-linear-to-b from-white to-[#f1f1f1] shadow-[0_1px_0_#9a9a9a]">Добавить</div>
     <div class="ml-[21px] flex w-[60px] rounded-[3px] border border-[#c9c9c9] bg-linear-to-b from-white to-[#f1f1f1] pt-0! shadow-[0_1px_0_#9a9a9a]"><span class="flex flex-1 items-center justify-center border-r border-[#c9c9c9]"><svg class="h-[14px] w-[12px]"><use href="#up"/></svg></span><span class="flex flex-1 items-center justify-center"><svg class="h-[14px] w-[12px]"><use href="#down"/></svg></span></div>
     <div class="ml-[20px] flex w-[95px] items-center gap-[5px] rounded-[3px] border border-[#c9c9c9] bg-linear-to-b from-white to-[#f1f1f1] pl-[13px] shadow-[0_1px_0_#9a9a9a]">Заполнить<svg class="h-[4px] w-[6px]"><use href="#dd"/></svg></div>
     <div class="ml-auto flex w-[61px] items-center gap-[8px] rounded-[3px] border border-[#c9c9c9] bg-linear-to-b from-white to-[#f1f1f1] pl-[13px] shadow-[0_1px_0_#9a9a9a]">Еще<svg class="h-[4px] w-[6px]"><use href="#dd"/></svg></div>
    </div>
    <div class="mt-[3px] h-[322px] w-[1650px] border border-[#a8a8a8]">
     <div class="grid h-[30px] grid-cols-[67px_517px_87px_107px_466px_117px_147px_1fr] border-b border-[#d9d9d9] bg-[#f0f0f0] text-[#4f4f4f] [&>div]:flex [&>div]:items-center [&>div]:border-r [&>div]:border-[#dcdcdc] [&>div]:pl-[8px] [&>div]:pt-[2px]"><div>N</div><div>Договор</div><div>Валюта</div><div>Курс</div><div>Документ расчетов</div><div>Сумма</div><div>Сумма расчетов</div><div class="border-r-0">Счет учета</div></div>
     <div class="mt-[1px] grid h-[29px] grid-cols-[67px_517px_87px_107px_466px_117px_147px_1fr] border-b border-[#dcdcdc] bg-[#fdf1c4] text-[#333] [&>div]:flex [&>div]:items-center [&>div]:border-r [&>div]:border-[#fff8e0] [&>div]:pt-[3px]"><div class="justify-end pr-[7px]">1</div><div class="bg-[#fde08a] pl-[8px]">договор поставки №11</div><div class="pl-[9px]">руб.</div><div class="justify-end pr-[8px] text-[#9f9f9f]">1,0000</div><div class="pl-[8px]">Реализация (акт, накладная) 0001-000030 от 23.09.2019 14:00:00</div><div class="justify-end pr-[7px]">12 000,00</div><div class="justify-end pr-[7px]">12 000,00</div><div class="pl-[8px]">62.01</div></div>
    </div>
   </div>
   <div class="ml-[823px] mt-[9px] flex h-[35px] w-[849px] items-center bg-[#d9d9d9] text-[#4f4f4f]"><span class="ml-[5px] w-[181px]">Дебиторская задолженность:</span><span class="flex h-[24px] w-[129px] items-center justify-end border border-[#d3d3d3] pr-[1px] text-[#333]">12 000,00</span><span class="ml-[11px] w-[187px]">Кредиторская задолженность:</span><span class="flex h-[24px] w-[130px] items-center justify-end border border-[#d3d3d3] pr-[1px] text-[#333]">12 000,00</span><span class="ml-[12px] w-[59px]">Разница:</span><span class="flex h-[24px] w-[133px] items-center justify-end border border-[#d3d3d3] pr-[6px] text-[#333]">0,00</span></div>
   <div class="mt-[7px] flex h-[31px] items-center text-[#4f4f4f]"><span class="w-[146px]">Комментарий:</span><div class="flex h-[31px] w-[415px] items-center border-2 border-[#fcc92a] pl-[4px]"><span class="h-[17px] w-[1px] bg-black"></span></div><span class="ml-[8px] w-[99px]">Ответственный:</span><div class="flex h-[25px] w-[409px] items-stretch rounded-[3px] border border-[#a6a6a6] text-[#333]"><span class="flex flex-1 items-center pl-[3px]">о</span><span class="flex w-[21px] items-center justify-center border-l border-[#a6a6a6]"><svg class="h-[4px] w-[6px]"><use href="#dd"/></svg></span><span class="flex w-[21px] items-center justify-center border-l border-[#a6a6a6]"><svg class="h-[10px] w-[10px]"><use href="#open"/></svg></span></div></div>
  </main>
 </div>
</section>
</body></html>
